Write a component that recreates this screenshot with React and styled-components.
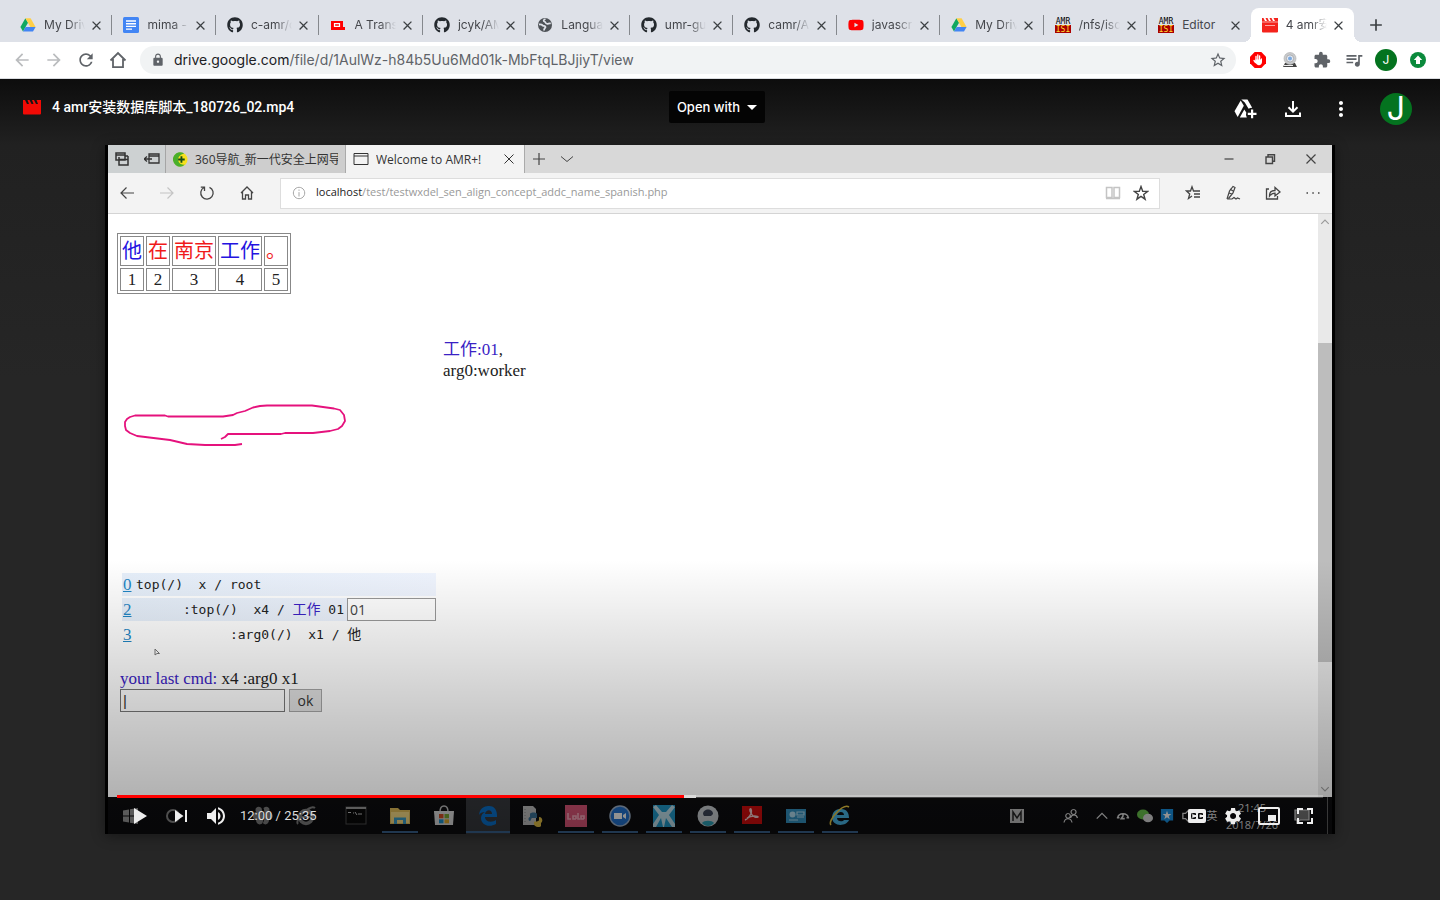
import React from "react";
import styled, { createGlobalStyle, css } from "styled-components";
import { FaGithub, FaYoutube } from "react-icons/fa";
import {
  MdArrowBack,
  MdArrowForward,
  MdRefresh,
  MdLock,
  MdStarBorder,
  MdExtension,
  MdQueueMusic,
  MdMoreVert,
  MdClose,
  MdAdd,
  MdSettings,
} from "react-icons/md";

const GlobalStyle = createGlobalStyle`
  *, *::before, *::after { box-sizing: border-box; }
  html, body, #root { height: 100%; }
  body {
    margin: 0;
    background: #262626;
    font-family: Inter, "Noto Sans CJK SC", sans-serif;
  }
  button { font: inherit; color: inherit; border: 0; padding: 0; background: none; cursor: pointer; }
  svg { display: block; flex: none; }
`;

const Page = styled.div`
  min-height: 100%;
  display: flex;
  flex-direction: column;
`;

/* ---------- outer browser ---------- */

const TabStrip = styled.nav`
  display: flex;
  height: 42px;
  padding: 8px 0 0 9px;
  background: #dee1e8;
`;

const Tabs = styled.div`
  display: flex;
  flex: 1;
  min-width: 0;
`;

const Tab = styled.div`
  flex: 1 1 0;
  min-width: 0;
  height: 34px;
  display: flex;
  align-items: center;
  padding: 0 7px 0 11px;
  position: relative;
  color: #45474c;
  border-radius: 8px 8px 0 0;
  ${(p) =>
    p.$divider &&
    css`
      &::after {
        content: "";
        position: absolute;
        right: 0;
        top: 7px;
        width: 1px;
        height: 20px;
        background: #85888d;
      }
    `}
  ${(p) =>
    p.$active &&
    css`
      background: #fff;
      &::before,
      &::after {
        content: "";
        position: absolute;
        bottom: 0;
        width: 8px;
        height: 8px;
      }
      &::before {
        left: -8px;
        background: radial-gradient(circle at 0 0, transparent 8px, #fff 8px);
      }
      &::after {
        right: -8px;
        background: radial-gradient(circle at 100% 0, transparent 8px, #fff 8px);
      }
    `}
`;

const TabButton = styled.button`
  flex: 1;
  min-width: 0;
  display: flex;
  align-items: center;
  gap: 8px;
  font-size: 12px;
  line-height: 16px;
  text-align: left;
`;

const TabTitle = styled.span`
  flex: 1;
  min-width: 0;
  overflow: hidden;
  white-space: nowrap;
  mask-image: ${(p) => (p.$fade ? "linear-gradient(to right, #000 calc(100% - 16px), transparent)" : "none")};
`;

const TabClose = styled.button`
  width: 16px;
  height: 16px;
  margin-left: 4px;
  color: #3c4043;
`;

const NewTab = styled.button`
  width: 86px;
  height: 34px;
  padding-left: 12px;
  color: #3c4043;
`;

const Toolbar = styled.div`
  display: flex;
  align-items: center;
  height: 37px;
  padding: 0 12px;
  background: #fff;
  border-bottom: 1px solid #dadce0;
`;

const ToolButton = styled.button`
  width: 20px;
  height: 20px;
  margin-right: 12px;
  display: grid;
  place-items: center;
  color: ${(p) => (p.$dim ? "#babcbe" : "#5f6368")};
`;

const Address = styled.div`
  flex: 1;
  height: 28px;
  display: flex;
  align-items: center;
  padding: 0 9px 0 11px;
  border-radius: 14px;
  background: #f1f3f4;
  color: #5f6368;
`;

const Url = styled.div`
  flex: 1;
  margin-left: 9px;
  font-size: 14px;
  line-height: 20px;
  white-space: nowrap;
  b {
    font-weight: 400;
    color: #202124;
  }
`;

const Extensions = styled.div`
  display: flex;
  align-items: center;
  gap: 12px;
  margin-left: 12px;
`;

const ExtButton = styled.button`
  width: 20px;
  height: 20px;
  display: grid;
  place-items: center;
  color: #5f6368;
`;

const Avatar = styled.button`
  width: ${(p) => p.$size}px;
  height: ${(p) => p.$size}px;
  border-radius: 50%;
  background: #04731f;
  color: #fff;
  font-size: ${(p) => p.$font}px;
  line-height: ${(p) => p.$size}px;
  text-align: center;
`;

const ProfileSlot = styled.div`
  width: 20px;
  display: flex;
  justify-content: center;
  button {
    flex: none;
  }
`;

/* ---------- viewer ---------- */

const Viewer = styled.main`
  flex: 1;
  display: flex;
  flex-direction: column;
  background: linear-gradient(#0d0d0d, #212121 66px, #262626 300px);
  padding-bottom: 66px;
`;

const ViewerBar = styled.header`
  display: grid;
  grid-template-columns: 1fr auto 1fr;
  align-items: center;
  height: 66px;
  padding: 0 28px 10px 22px;
  color: #fff;
`;

const FileTitle = styled.h1`
  display: flex;
  align-items: center;
  gap: 10px;
  margin: 0;
  font-family: Roboto, "Noto Sans CJK SC", sans-serif;
  font-size: 14px;
  line-height: 20px;
  font-weight: 500;
  white-space: nowrap;
`;

const OpenWith = styled.button`
  display: flex;
  align-items: center;
  gap: 7px;
  height: 32px;
  padding: 0 8px;
  border-radius: 2px;
  background: #040404;
  font-size: 13px;
  font-weight: 500;
`;

const ViewerActions = styled.div`
  display: flex;
  align-items: center;
  justify-content: flex-end;
  gap: 24px;
  padding-top: 4px;
`;

const IconButton = styled.button`
  width: 24px;
  height: 24px;
  display: grid;
  place-items: center;
`;

const AvatarSlot = styled.div`
  margin-left: 3px;
`;

const Player = styled.section`
  position: relative;
  margin: 0 105px;
  padding: 0 3px;
  background: #000;
  box-shadow: 0 2px 12px rgba(0, 0, 0, 0.4);
`;

/* ---------- recorded window ---------- */

const EdgeTabs = styled.div`
  display: flex;
  height: 28px;
  background: #d8d8d8;
  font-family: "Open Sans", "Noto Sans CJK SC", sans-serif;
  font-size: 12px;
  color: #333;
`;

const EdgeCorner = styled.div`
  width: 58px;
  display: flex;
  align-items: center;
  gap: 14px;
  padding-left: 6px;
  background: #cdd1d2;
  border-right: 1px solid #a5a5a5;
`;

const EdgeTab = styled.div`
  width: ${(p) => (p.$active ? 179 : 180)}px;
  display: flex;
  align-items: center;
  gap: 7px;
  padding: 0 7px;
  border-right: 1px solid #aaa;
  background: ${(p) => (p.$active ? "#f3f3f3" : "#cecece")};
`;

const EdgeTitle = styled.span`
  flex: 1;
  min-width: 0;
  overflow: hidden;
  white-space: nowrap;
`;

const EdgeButton = styled.button`
  width: 28px;
  display: grid;
  place-items: center;
  color: ${(p) => (p.$dim ? "#c4c4c4" : "#444")};
`;

const WindowButtons = styled.div`
  display: flex;
  gap: 13px;
  margin-left: auto;
  padding-right: 7px;
`;

const EdgeNav = styled.div`
  display: flex;
  align-items: center;
  height: 41px;
  padding: 0 5px;
  gap: 12px;
  background: #f3f3f3;
  border-bottom: 1px solid #d4d4d4;
`;

const EdgeAddress = styled.div`
  flex: 1;
  height: 31px;
  margin: 0 7px;
  display: flex;
  align-items: center;
  background: #fff;
  border: 1px solid #ddd;
  padding: 0 4px 0 11px;
  font-family: "Open Sans", sans-serif;
  font-size: 11px;
  line-height: 16px;
  color: #999;
  b {
    font-weight: 400;
    color: #222;
  }
`;

const EdgeUrl = styled.span`
  flex: 1;
  margin-left: 10px;
  padding-bottom: 3px;
`;

const Canvas = styled.div`
  display: flex;
  min-height: 583px;
  background: #fff;
`;

const Content = styled.div`
  flex: 1;
  padding: 19px 9px 0;
  color: #222;
  font-family: "Liberation Serif", "Noto Sans CJK SC", serif;
  font-size: 17px;
  line-height: 21px;
`;

const Scrollbar = styled.div`
  width: 14px;
  display: flex;
  flex-direction: column;
  align-items: center;
  padding: 3px 0;
  background: #e9e9e9;
  color: #999;
`;

const Thumb = styled.div`
  width: 14px;
  height: 319px;
  margin: 116px 0 auto;
  background: #bdbdbd;
`;

const WordTable = styled.table`
  border: 1px solid #888;
  border-spacing: 2px;
  text-align: center;
  td {
    border: 1px solid #888;
    padding: 1px;
    line-height: 19px;
  }
`;

const Word = styled.td`
  && {
    font-size: 20px;
    line-height: 26px;
    color: ${(p) => (p.$verb ? "#2413e0" : "#f01a1a")};
  }
`;

const Note = styled.p`
  margin: 45px 0 0 326px;
`;

const Blue = styled.span`
  color: #3a22c4;
`;

const Scribble = styled.svg`
  margin: 23px 0 0 6px;
`;

const Tree = styled.div`
  width: 314px;
  margin: 125px 0 0 5px;
  font-family: "DejaVu Sans Mono", "Noto Sans CJK SC", monospace;
  font-size: 13px;
`;

const TreeRow = styled.div`
  display: flex;
  align-items: center;
  height: 23px;
  margin-bottom: 2px;
  white-space: pre;
  background: ${(p) => (p.$lit ? "linear-gradient(90deg, #e6effa, #f0f5ff)" : "none")};
  span {
    font-size: 14px;
  }
  a {
    width: 13px;
    margin-left: 1px;
    color: #1f86c4;
    font-family: "Liberation Serif", serif;
    font-size: 17px;
  }
`;

const SenseInput = styled.input`
  width: 89px;
  height: 23px;
  margin-left: auto;
  padding: 0 2px;
  border: 1px solid #999;
  background: #fff;
  font-family: "Open Sans", sans-serif;
  font-size: 14px;
  color: #444;
`;

const Cursor = styled.svg`
  margin: 0 0 0 36px;
`;

const Command = styled.form`
  margin: 12px 0 0 3px;
  label {
    display: block;
  }
  div {
    display: flex;
    gap: 4px;
  }
`;

const CommandInput = styled.input`
  width: 165px;
  height: 23px;
  padding: 0 2px;
  border: 1px solid #777;
  background: #fff;
  font-family: "Liberation Sans", sans-serif;
  font-size: 15px;
  color: #333;
`;

const Submit = styled.button`
  && {
    width: 33px;
    height: 23px;
    border: 1px solid #a5a5a5;
    background: #e2e2e2;
    font-family: "Open Sans", sans-serif;
    font-size: 14px;
    line-height: 16px;
    color: #333;
  }
`;

const Taskbar = styled.div`
  display: flex;
  height: 37px;
  padding-left: 4px;
  background: #0b0b0d;
`;

const PinnedGroup = styled.div`
  display: flex;
  margin-right: 7px;
`;

const TaskItem = styled.button`
  width: ${(p) => (p.$pinned ? 43 : 44)}px;
  display: grid;
  place-items: center;
  position: relative;
  background: ${(p) => (p.$active ? "#303236" : "none")};
  ${(p) =>
    p.$running &&
    css`
      &::after {
        content: "";
        position: absolute;
        left: ${p.$active ? 0 : 4}px;
        right: ${p.$active ? 0 : 4}px;
        bottom: 1px;
        height: 2px;
        background: #33587f;
      }
    `}
`;

const Tray = styled.div`
  display: flex;
  align-items: center;
  margin-left: auto;
  color: #c4c4c4;
  font-family: "Open Sans", "Noto Sans CJK SC", sans-serif;
  font-size: 11px;
  line-height: 17px;
`;

const TrayItem = styled.div`
  width: ${(p) => p.$w}px;
  display: grid;
  place-items: center;
  text-align: center;
`;

const ShowDesktop = styled.div`
  width: 4px;
  margin-right: 4px;
  height: 37px;
  border-right: 1px solid #555;
`;

const Shade = styled.div`
  position: absolute;
  inset: auto 3px 0;
  height: 274px;
  pointer-events: none;
  background: linear-gradient(
    transparent,
    rgba(0, 0, 0, 0.1) 28%,
    rgba(0, 0, 0, 0.21) 58%,
    rgba(0, 0, 0, 0.3) 86%,
    rgba(0, 0, 0, 0.38)
  );
`;

const Controls = styled.div`
  position: absolute;
  inset: auto 12px 0;
  color: #eee;
`;

const Seek = styled.input`
  display: block;
  appearance: none;
  width: 100%;
  height: 3px;
  margin: 0;
  background: linear-gradient(
    90deg,
    #f00 ${(p) => p.$played}%,
    #dadada ${(p) => p.$played}% ${(p) => p.$loaded}%,
    rgba(255, 255, 255, 0.25) ${(p) => p.$loaded}%
  );
  &::-webkit-slider-thumb {
    appearance: none;
    width: 0;
    height: 0;
  }
`;

const ControlRow = styled.div`
  display: flex;
  align-items: center;
  height: 36px;
  padding: 0 0 0 5px;
`;

const ControlButton = styled.button`
  width: ${(p) => (p.$wide ? 41 : 36)}px;
  height: 36px;
`;

const Time = styled.span`
  margin: 0 auto 0 5px;
  font-family: Roboto, sans-serif;
  font-size: 13px;
  line-height: 20px;
  color: #ddd;
`;

/* ---------- drawings ---------- */

const DriveLogo = () => (
  <svg width="16" height="16" viewBox="0 0 16 16">
    <path d="M5.4 1.2 0.4 10.1 3 14.6 8 5.8z" fill="#11a861" />
    <path d="M5.4 1.2h5.2l5 8.9h-5.2z" fill="#ffcf48" />
    <path d="M5.6 10.1h10L13 14.6H3z" fill="#4285f4" />
  </svg>
);

const DocsLogo = () => (
  <svg width="16" height="16" viewBox="0 0 16 16">
    <rect width="16" height="16" rx="1.5" fill="#4285f4" />
    <path d="M3 4h10M3 6.7h10M3 9.4h10M3 12.1h6" stroke="#fff" strokeWidth="1.4" />
  </svg>
);

const RedBoxLogo = () => (
  <svg width="16" height="16" viewBox="0 0 16 16">
    <path d="M1 4h12v6h2v3H1z" fill="#f00" />
    <path d="M4.500 6.700h5v2.600h-5z" fill="#f00" stroke="#fff" strokeWidth="1.200" />
  </svg>
);

const GlobeLogo = () => (
  <svg width="16" height="16" viewBox="0 0 16 16">
    <circle cx="8" cy="8" r="7" fill="#4e5257" />
    <path d="M2 7.500c2-.3 3 .2 3.800 1 .8.700 2.700.3 2.700 1.500 0 1-1.500 1-1.500 3.500" fill="none" stroke="#dee1e8" strokeWidth="1.800" />
    <path d="M8.500 2c-2 .6-2.500 2.200-1 2.600 1.300.3.800 1.900 2.300 2.200 1.500.3 2-.8 4-.3" fill="none" stroke="#dee1e8" strokeWidth="1.600" />
  </svg>
);

const AmrLogo = () => (
  <svg width="16" height="16" viewBox="0 0 16 16" fontFamily="DejaVu Sans Mono, monospace" textAnchor="middle">
    <rect y="8" width="16" height="8" fill="#a00" />
    <text x="8" y="7" fontSize="8" fill="#000">AMR</text>
    <text x="8" y="15" fontSize="8" fill="#fd3">ISI</text>
  </svg>
);

const ClapperLogo = () => (
  <svg width="16" height="16" viewBox="0 0 16 16">
    <path d="M0 1h1.500l1.500 3h2L3.500 1h2L7 4h2L7.500 1h2L11 4h2l-1.500-3H16v13.500a1 1 0 0 1-1 1H1a1 1 0 0 1-1-1z" fill="#f4231c" />
    <path d="M0 5h16M3 8.500h10" stroke="#fff" strokeWidth=".6" />
  </svg>
);

const ViewerClapper = () => (
  <svg width="20" height="16" viewBox="0 0 20 16">
    <path d="M1 1h2l2 4h2L5.500 1h2l2 4h2l-1.500-4h2l2 4h2l-1.500-4H19v13.500a1 1 0 0 1-1 1H2a1 1 0 0 1-1-1z" fill="#f20a05" />
  </svg>
);

const HomeIcon = () => (
  <svg width="18" height="18" viewBox="0 0 18 18" fill="none" stroke="currentColor" strokeWidth="1.800">
    <path d="M1.500 9.500 9 2l7.500 7.500M4 8v8.100h10V8" />
  </svg>
);

const HandIcon = () => (
  <svg width="16" height="16" viewBox="0 0 16 16">
    <path d="M4.700 0h6.600L16 4.700v6.600L11.300 16H4.700L0 11.300V4.700z" fill="#f00" />
    <path d="M6 8V4.500M7.800 8V3M9.600 8V4M4 8.500l1.500 2" stroke="#fff" strokeWidth="1.300" strokeLinecap="round" />
    <path d="M5.400 7.500h5l1.600-1.500v4c0 2-1.300 3.200-3 3.200S6 12 5 10z" fill="#fff" />
  </svg>
);

const WebcamIcon = () => (
  <svg width="16" height="16" viewBox="0 0 16 16">
    <path d="M3 11h10l2 4H1z" fill="#444" />
    <path d="M2 13h9v1H2z" fill="#eee" />
    <circle cx="8" cy="6.500" r="6" fill="#c9cbcd" stroke="#aaa" strokeWidth=".6" />
    <circle cx="8" cy="6.500" r="3.600" fill="#e8ecf4" stroke="#999" strokeWidth=".7" />
    <circle cx="8" cy="6.500" r="2" fill="#7aa9e0" />
  </svg>
);

const UpIcon = () => (
  <svg width="16" height="16" viewBox="0 0 16 16">
    <circle cx="8" cy="8" r="8" fill="#0a8a3c" />
    <path d="M8 3.500 12.200 8H10v4H6V8H3.800z" fill="#fff" />
  </svg>
);

const DriveAddIcon = () => (
  <svg width="24" height="24" viewBox="0 0 24 24" fill="#fff">
    <path d="M8.300 2.500h6.200l4.700 8.200a6 6 0 0 0-3.600 1.100L11.800 5.500z" />
    <path d="M7.700 3.400 10.800 8.700 4.700 20 1.500 14.300z" />
    <path d="M11.300 12.500 13.300 15.500a6 6 0 0 0 .5 5H6.800z" />
    <path d="M18 12.500h2.200v3.200h3.300v2.200h-3.300v3.300H18v-3.300h-3.200v-2.200H18z" />
  </svg>
);

const DownloadIcon = () => (
  <svg width="24" height="24" viewBox="0 0 24 24" fill="none" stroke="#fff" strokeWidth="2">
    <path d="M12 4v10.500M7.500 10.300 12 14.700l4.500-4.400M5 15.500V19h14v-3.500" />
  </svg>
);

const Line = ({ size = 16, d, w = 1.2, fill = "none" }) => (
  <svg width={size} height={size} viewBox="0 0 16 16" fill={fill} stroke="currentColor" strokeWidth={w}>
    <path d={d} />
  </svg>
);

const STAR = "M8 1.500 9.700 6.200l5 .1-4 3.100 1.400 4.800L8 11.400l-4.100 2.800 1.400-4.800-4-3.100 5-.1z";

const Badge360 = () => (
  <svg width="15" height="15" viewBox="0 0 16 16">
    <circle cx="8" cy="8" r="7.500" fill="#f7e11d" />
    <path d="M3 14A7.500 7.500 0 0 1 12 1.700C7 3 5 6 5.500 9c.5 3 3 4.500 7 4.500A7.500 7.500 0 0 1 3 14z" fill="#4aaf2a" />
    <path d="M9 4.500v7M5.500 8h7" stroke="#164d14" strokeWidth="2" />
  </svg>
);

const YtIcon = ({ children }) => (
  <svg width="36" height="36" viewBox="0 0 36 36" fill="currentColor" fillRule="evenodd">
    {children}
  </svg>
);

const TaskSvg = ({ children, size = 22 }) => (
  <svg width={size} height={size} viewBox="0 0 22 22">
    {children}
  </svg>
);

const taskIcons = {
  windows: (
    <TaskSvg>
      <path d="M0 5.500 6 4.500v6H0zM7 4.300l8-1.300v7.500H7zM0 11.500h6v6L0 16.500zM7 11.500h8V19l-8-1.300z" fill="#888" />
    </TaskSvg>
  ),
  cortana: (
    <TaskSvg>
      <circle cx="7" cy="11" r="6" fill="none" stroke="#777" strokeWidth="2" />
    </TaskSvg>
  ),
  blank: <TaskSvg />,
  fan: (
    <TaskSvg>
      <path d="M9.500 3C6 0 2 3 4 7c-5 1-4 7 0 8 0 4 4 6 6.500 3 1.500-4 0-11-1-15zM11.500 3C15 0 19 3 17 7c5 1 5 7 0 8 0 4-4 6-6 3 2-4 2-11 .5-15z" fill="#707070" />
    </TaskSvg>
  ),
  oldIe: (
    <TaskSvg>
      <circle cx="11" cy="12" r="6.500" fill="none" stroke="#707070" strokeWidth="3.500" />
      <path d="M6 12h11M3 19C-1 15 15-1 20 3" stroke="#707070" strokeWidth="2" fill="none" />
    </TaskSvg>
  ),
  terminal: (
    <TaskSvg>
      <rect x="1" y="2" width="20" height="17" fill="#080808" stroke="#444" />
      <path d="M1 3h20" stroke="#888" strokeWidth="2" />
      <path d="M3 7.500h3M8 8h1M10 7l2 3M13 9h4" stroke="#aaa" />
    </TaskSvg>
  ),
  folder: (
    <TaskSvg>
      <path d="M1 3h8l2 2h10v14H1z" fill="#c9a94f" />
      <path d="M2 7h18v11H2z" fill="#ddc477" />
      <path d="M5 19v-6.500h12V19h-3v-4H8v4z" fill="#348bb0" />
    </TaskSvg>
  ),
  store: (
    <TaskSvg>
      <path d="M7 7c0-8 8-8 8 0" fill="none" stroke="#aaa" strokeWidth="1.500" />
      <path d="M1 6h20l-1 14H2z" fill="#c2c2c2" />
      <path d="M6 9h4.500v4.300H6z" fill="#b8441e" />
      <path d="M11.500 9H16v4.300h-4.500z" fill="#6b942b" />
      <path d="M6 14.300h4.500v4H6z" fill="#1980b2" />
      <path d="M11.500 14.300H16v4h-4.500z" fill="#c89725" />
    </TaskSvg>
  ),
  edge: (
    <TaskSvg>
      <path d="M2 10C3 1 10 1 12 1c6 0 8 5 8 9v2H8c0 5 7 6 11 3v4c-7 4-15 1-15-6 0-3 2-5 4-6-3 0-5 1-6 3zm6-1h7c0-5-6-5-7 0z" fill="#0863b3" />
    </TaskSvg>
  ),
  python: (
    <TaskSvg>
      <path d="M2 1h10l3 3v16H2z" fill="#a7a7a7" />
      <path d="M4 4v14" stroke="#777" strokeDasharray="1 2" />
      <path d="M9 12V9c0-2 7-2 7 0v4h-5c-1 0-1 3-2 3-2 0-2-4 0-4z" fill="#326384" />
      <path d="M13 19v-2c0-1 5 0 5-2v-3c4 0 4 5 2 6v3c-1 2-7 1-7-2z" fill="#c7a83c" />
    </TaskSvg>
  ),
  lala: (
    <TaskSvg>
      <path d="M0 0h22v22H0z" fill="#c04a68" />
      <path d="M3 8v6h3M11 14v-3H8v3h3M13 8v6h2M19 14v-3h-3v3h3" stroke="#d995a6" strokeWidth="1.600" fill="none" />
    </TaskSvg>
  ),
  zoom: (
    <TaskSvg>
      <circle cx="11" cy="11" r="10" fill="#1e64b6" stroke="#8b9db3" strokeWidth="1.500" />
      <path d="M5 8h8v6H5zM14 10l3-2v6l-3-2z" fill="#ddd" />
    </TaskSvg>
  ),
  rays: (
    <TaskSvg>
      <path d="M0 0h22v22H0z" fill="#1c86b0" />
      <path d="M0 2 3 0l6 7h4l6-7 3 2-6 8 6 9v3h-3l-6-9-2 9h-1l-2-9-5 9H0v-3l6-9z" fill="#a9c5cf" />
    </TaskSvg>
  ),
  person: (
    <TaskSvg>
      <circle cx="11" cy="11" r="10.500" fill="#b1b5b8" />
      <path d="M6 9c0-6 10-6 10 0l-2 2H7z" fill="#343b4b" />
      <path d="M5 18c2-3 10-3 12 0-3 4-9 4-12 0z" fill="#278b9e" />
    </TaskSvg>
  ),
  acrobat: (
    <TaskSvg>
      <path d="M1 1h20v18H1z" fill="#b90b0b" />
      <path d="M4 15c3-1 8-7 6-11-1-1-2 1 0 4 2 4 5 5 7 4 1-1-6-2-11 1" fill="none" stroke="#d5b4b4" strokeWidth="1.400" />
    </TaskSvg>
  ),
  panel: (
    <TaskSvg>
      <path d="M1 4h20v14H1z" fill="#2d80aa" />
      <circle cx="7.500" cy="9.500" r="3" fill="#9dc2d3" />
      <path d="M12 7h7v3h-7zM12 12h7M4 15h9" stroke="#9dc2d3" strokeWidth="1.200" fill="none" />
    </TaskSvg>
  ),
  ie: (
    <TaskSvg>
      <path d="M3 12C4 5 8 4 12 4c6 0 8 4 8 9H8c0 4 6 4 7 2h5c-3 7-17 7-17-3zm5-2h7c0-4-6-4-7 0z" fill="#3fa0cb" />
      <path d="M2 20C-2 16 14-2 20 2" fill="none" stroke="#d0b23a" strokeWidth="1.600" />
    </TaskSvg>
  ),
};

/* ---------- data ---------- */

const tabs = [
  { icon: <DriveLogo />, title: "My Driv" },
  { icon: <DocsLogo />, title: "mima -" },
  { icon: <FaGithub size={16} color="#24292e" />, title: "c-amr/c" },
  { icon: <RedBoxLogo />, title: "A Trans" },
  { icon: <FaGithub size={16} color="#24292e" />, title: "jcyk/AM" },
  { icon: <GlobeLogo />, title: "Langua" },
  { icon: <FaGithub size={16} color="#24292e" />, title: "umr-gu" },
  { icon: <FaGithub size={16} color="#24292e" />, title: "camr/A" },
  { icon: <FaYoutube size={16} color="#f00" />, title: "javascr" },
  { icon: <DriveLogo />, title: "My Driv" },
  { icon: <AmrLogo />, title: "/nfs/iso" },
  { icon: <AmrLogo />, title: "Editor", short: true },
  { icon: <ClapperLogo />, title: "4 amr安", active: true },
];

const words = [
  { text: "他", verb: true },
  { text: "在" },
  { text: "南京" },
  { text: "工作", verb: true },
  { text: "。" },
];

const running = [
  { icon: "terminal" },
  { icon: "folder", running: true },
  { icon: "store" },
  { icon: "edge", running: true, active: true },
  { icon: "python" },
  { icon: "lala", running: true },
  { icon: "zoom", running: true },
  { icon: "rays", running: true },
  { icon: "person", running: true },
  { icon: "acrobat", running: true },
  { icon: "panel", running: true },
  { icon: "ie", running: true },
];

/* ---------- sections ---------- */

const Browser = () => (
  <>
    <TabStrip aria-label="Browser tabs">
      <Tabs>
        {tabs.map((t, i) => (
          <Tab key={i} $active={t.active} $divider={i < 11}>
            <TabButton>
              {t.icon}
              <TabTitle $fade={!t.short}>{t.title}</TabTitle>
            </TabButton>
            <TabClose aria-label="Close tab">
              <MdClose size={15} />
            </TabClose>
          </Tab>
        ))}
      </Tabs>
      <NewTab aria-label="New tab">
        <MdAdd size={20} />
      </NewTab>
    </TabStrip>
    <Toolbar>
      <ToolButton $dim aria-label="Back"><MdArrowBack size={20} /></ToolButton>
      <ToolButton $dim aria-label="Forward"><MdArrowForward size={20} /></ToolButton>
      <ToolButton aria-label="Reload"><MdRefresh size={20} /></ToolButton>
      <ToolButton aria-label="Home"><HomeIcon /></ToolButton>
      <Address>
        <MdLock size={14} />
        <Url><b>drive.google.com</b>/file/d/1AulWz-h84b5Uu6Md01k-MbFtqLBJjiyT/view</Url>
        <MdStarBorder size={18} />
      </Address>
      <Extensions>
        <ExtButton aria-label="Ad blocker"><HandIcon /></ExtButton>
        <ExtButton aria-label="Webcam"><WebcamIcon /></ExtButton>
        <ExtButton aria-label="Extensions"><MdExtension size={18} /></ExtButton>
        <ExtButton aria-label="Media"><MdQueueMusic size={20} /></ExtButton>
        <ProfileSlot><Avatar $size={22} $font={12}>J</Avatar></ProfileSlot>
        <ExtButton aria-label="Update"><UpIcon /></ExtButton>
      </Extensions>
    </Toolbar>
  </>
);

const RecordedBrowser = () => (
  <>
    <EdgeTabs>
      <EdgeCorner>
        <Line d="M2 2h9v7H2zM2 4h9M5 6v8h9V5M5 8.500h9M11 5h3" w={1.5} />
        <Line d="M5 3h10v9H5zM5 5h10M0 8h8M3 5.500 0 8l3 2.500" w={1.3} />
      </EdgeCorner>
      <EdgeTab>
        <Badge360 />
        <EdgeTitle>360导航_新一代安全上网导</EdgeTitle>
      </EdgeTab>
      <EdgeTab $active>
        <Line d="M1 2.500h14v11H1zM1 5h14" w={1} />
        <EdgeTitle>Welcome to AMR+!</EdgeTitle>
        <Line d="m3.500 3.500 9 9m0-9-9 9" w={1} />
      </EdgeTab>
      <EdgeButton aria-label="New tab"><Line d="M8 2v12M2 8h12" /></EdgeButton>
      <EdgeButton aria-label="Tab previews"><Line d="m2 5.500 6 5 6-5" w={1} /></EdgeButton>
      <WindowButtons>
        <EdgeButton aria-label="Minimize"><Line d="M3.500 8h9" /></EdgeButton>
        <EdgeButton aria-label="Restore"><Line d="M4 6h6.500v6.500H4zM6 6V3.800h6.500v6.500h-2" w={1.4} /></EdgeButton>
        <EdgeButton aria-label="Close window"><Line d="m3.500 3.500 9 9m0-9-9 9" /></EdgeButton>
      </WindowButtons>
    </EdgeTabs>
    <EdgeNav>
      <EdgeButton aria-label="Back"><Line d="M15 8H2M7.500 2.500 2 8l5.500 5.500" /></EdgeButton>
      <EdgeButton $dim aria-label="Forward"><Line d="M1 8h13M8.500 2.500 14 8l-5.500 5.500" /></EdgeButton>
      <EdgeButton aria-label="Refresh"><Line d="M10.500 2.300a6.200 6.200 0 1 1-5.500.2M5.500 6V2.200H1.800" w={1.3} /></EdgeButton>
      <EdgeButton aria-label="Home"><Line d="M2 8 8 2l6 6M3.500 7v7h3v-4h3v4h3V7" w={1.3} /></EdgeButton>
      <EdgeAddress>
        <Line size={14} d="M8 1.500a6.500 6.500 0 1 0 .1 0M8 7v5M8 4v1.500" w={1} />
        <EdgeUrl><b>localhost</b>/test/testwxdel_sen_align_concept_addc_name_spanish.php</EdgeUrl>
        <EdgeButton $dim aria-label="Reading view"><Line d="M1.500 2.500H7v10H1.500zM9 2.500h5.500v10H9zM1 13.500h14" w={1.5} /></EdgeButton>
        <EdgeButton aria-label="Add to favorites"><Line d={STAR} w={1.4} /></EdgeButton>
      </EdgeAddress>
      <EdgeButton aria-label="Favorites"><Line d="M15 6H8.500L7 1.800 5.500 6H1.500l3.200 3-1.200 4.500L7 11M9 9h6M9 12h6" w={1.3} /></EdgeButton>
      <EdgeButton aria-label="Notes"><Line d="M2 14 4.500 6 8 1.500l2 1L8 8l-4.500 5.500M2 14h5l2-1.500 2 1.500 1.500-1L15 14M5 4l3 2M4 8l3 1" /></EdgeButton>
      <EdgeButton aria-label="Share"><Line d="M4 4H1.500v10h11v-3M4.500 11c0-4 2-5.500 5.500-5.500V2.500L15 7l-5 4V8.200C7.500 8.200 6 9 4.500 11z" w={1.3} /></EdgeButton>
      <EdgeButton aria-label="More"><Line d="M1.500 8H3M7.300 8h1.500M13 8h1.500" w={1.5} /></EdgeButton>
    </EdgeNav>
    <Canvas>
      <Content>
        <WordTable>
          <tbody>
            <tr>{words.map((w) => <Word key={w.text} $verb={w.verb}>{w.text}</Word>)}</tr>
            <tr>{words.map((w, i) => <td key={w.text}>{i + 1}</td>)}</tr>
          </tbody>
        </WordTable>
        <Note>
          <Blue>工作:01</Blue>,<br />
          arg0:worker
        </Note>
        <Scribble width="224" height="44" viewBox="0 0 224 44" fill="none" stroke="#e5127d" strokeWidth="1.800" strokeLinejoin="round">
          <path d="M119 40 112 41H82L64 40 47 36 14 32 7 29 3 26 2 22V18L4 15 7 13 12 11.500H42L45 12.500H100L110 11 114 9 122 7 130 3.500 137 2 144 1.500H189L200 3 211 4.500 217 6 221 11 222 17 219 22 215 25 207 27 190 29H162L158 30H105L102 33 98 35" />
        </Scribble>
        <Tree>
          <TreeRow $lit><a href="#0">0</a>{"top(/)  x / root"}</TreeRow>
          <TreeRow $lit>
            <a href="#2">2</a>{"      :top(/)  x4 / "}<Blue>工作</Blue>{" 01"}
            <SenseInput aria-label="Sense" defaultValue="01" />
          </TreeRow>
          <TreeRow><a href="#3">3</a>{"            :arg0(/)  x1 / "}<span>他</span></TreeRow>
        </Tree>
        <Cursor width="8" height="8" viewBox="0 0 8 8" fill="#fff" stroke="#777">
          <path d="M2 1v6l2-1.500h2.500z" />
        </Cursor>
        <Command onSubmit={(e) => e.preventDefault()}>
          <label htmlFor="cmd"><Blue>your last cmd:</Blue> x4 :arg0 x1</label>
          <div>
            <CommandInput id="cmd" defaultValue="|" />
            <Submit>ok</Submit>
          </div>
        </Command>
      </Content>
      <Scrollbar>
        <Line size={10} d="m2 11 6-6 6 6" w={1.8} />
        <Thumb />
        <Line size={10} d="m2 5 6 6 6-6" w={1.8} />
      </Scrollbar>
    </Canvas>
    <Taskbar>
      <PinnedGroup>
        {["windows", "cortana", "blank", "fan", "oldIe"].map((name) => (
          <TaskItem key={name} $pinned aria-label={name}>{taskIcons[name]}</TaskItem>
        ))}
      </PinnedGroup>
      {running.map((t) => (
        <TaskItem key={t.icon} $running={t.running} $active={t.active} aria-label={t.icon}>
          {taskIcons[t.icon]}
        </TaskItem>
      ))}
      <Tray>
        <TrayItem $w={66}>
          <svg width="14" height="14" viewBox="0 0 14 14">
            <path d="M0 0h14v14H0z" fill="#aaa" />
            <path d="M3 12V3l4 6 4-6v9" fill="none" stroke="#222" strokeWidth="1.500" />
          </svg>
        </TrayItem>
        <TrayItem $w={42}><Line d="M10.500 1.500a2.500 2.500 0 1 0 .1 0M7.500 10c1-4 6-4 7 0M5 5.500A2.300 2.300 0 1 0 5.100 5.500M1 14.500c1-5 7-5 8 0" /></TrayItem>
        <TrayItem $w={20}><Line size={14} d="m2 11 6-6 6 6" w={1.5} /></TrayItem>
        <TrayItem $w={22}><Line size={14} d="M2 10c1-6 11-6 12 0M1 10h3M12 10h3M8 5v3L6 11h4" w={1.8} /></TrayItem>
        <TrayItem $w={22}>
          <svg width="16" height="14" viewBox="0 0 16 14">
            <ellipse cx="6" cy="5.500" rx="6" ry="5" fill="#5cab42" />
            <ellipse cx="11" cy="9" rx="5" ry="4.300" fill="#c0c0c0" />
          </svg>
        </TrayItem>
        <TrayItem $w={22}>
          <svg width="14" height="14" viewBox="0 0 16 16">
            <path d="M1 0h14v13h-4l-3 3-3-3H1z" fill="#1580c8" />
            <path d={STAR} fill="#ddd" transform="translate(2 1) scale(.75)" />
          </svg>
        </TrayItem>
        <TrayItem $w={22}><Line size={14} d="M1 5h3l4-4v14l-4-4H1zM11 5q3 3 0 6" w={1.5} /></TrayItem>
        <TrayItem $w={24}>英</TrayItem>
        <TrayItem $w={56}>
          <span>21:45<br />2018/7/26</span>
        </TrayItem>
        <TrayItem $w={44}><Line d="M1 2h14v10H6l-3 3v-3H1z" fill="#666" /></TrayItem>
        <ShowDesktop />
      </Tray>
    </Taskbar>
  </>
);

const cc = "M17 17h-1.500v-.5h-2v3h2V19H17v1a1 1 0 0 1-1 1h-3a1 1 0 0 1-1-1v-4a1 1 0 0 1 1-1h3a1 1 0 0 1 1 1zM24 17h-1.500v-.5h-2v3h2V19H24v1a1 1 0 0 1-1 1h-3a1 1 0 0 1-1-1v-4a1 1 0 0 1 1-1h3a1 1 0 0 1 1 1z";

const PlayerControls = () => (
  <Controls>
    <Seek type="range" aria-label="Seek" min="0" max="1535" defaultValue="720" $played={47} $loaded={48} />
    <ControlRow>
      <ControlButton $wide aria-label="Play"><YtIcon><path d="M12 26 25 18 12 10z" /></YtIcon></ControlButton>
      <ControlButton aria-label="Next"><YtIcon><path d="M12 24 20.500 18 12 12zM22 12v12h2V12z" /></YtIcon></ControlButton>
      <ControlButton aria-label="Mute">
        <YtIcon>
          <path d="M8 21h4l5 5V10l-5 5H8zM19 14v8c1.480-.68 2.500-2.230 2.500-4S20.480 14.740 19 14zM19 11.290c2.890.860 5 3.540 5 6.710s-2.110 5.850-5 6.710v2.060c4.010-.910 7-4.490 7-8.770s-2.990-7.860-7-8.770z" />
        </YtIcon>
      </ControlButton>
      <Time>12:00 / 25:35</Time>
      <ControlButton aria-label="Captions">
        <YtIcon><path d={"M11 11a2 2 0 0 0-2 2v10a2 2 0 0 0 2 2h14a2 2 0 0 0 2-2V13a2 2 0 0 0-2-2z" + cc} /></YtIcon>
      </ControlButton>
      <ControlButton aria-label="Settings">
        <YtIcon><g transform="translate(8 8) scale(.84)"><MdSettings size={24} /></g></YtIcon>
      </ControlButton>
      <ControlButton aria-label="Miniplayer">
        <YtIcon><path d="M25 17h-8v6h8zM29 25V11a2 2 0 0 0-2-2H9a2 2 0 0 0-2 2v14a2 2 0 0 0 2 2h18a2 2 0 0 0 2-2zM27 25H9V11h18z" /></YtIcon>
      </ControlButton>
      <ControlButton aria-label="Full screen">
        <YtIcon><path d="M10 16h2v-4h4v-2h-6zM20 10v2h4v4h2v-6zM24 24h-4v2h6v-6h-2zM12 20h-2v6h6v-2h-4z" /></YtIcon>
      </ControlButton>
    </ControlRow>
  </Controls>
);

export default function App() {
  return (
    <Page>
      <GlobalStyle />
      <Browser />
      <Viewer>
        <ViewerBar>
          <FileTitle><ViewerClapper />4 amr安装数据库脚本_180726_02.mp4</FileTitle>
          <OpenWith>
            Open with
            <svg width="10" height="5" viewBox="0 0 10 5"><path d="M0 0h10L5 5z" fill="#fff" /></svg>
          </OpenWith>
          <ViewerActions>
            <IconButton aria-label="Add to Drive"><DriveAddIcon /></IconButton>
            <IconButton aria-label="Download"><DownloadIcon /></IconButton>
            <IconButton aria-label="More actions"><MdMoreVert size={24} /></IconButton>
            <AvatarSlot><Avatar $size={32} $font={32}>J</Avatar></AvatarSlot>
          </ViewerActions>
        </ViewerBar>
        <Player>
          <RecordedBrowser />
          <Shade />
          <PlayerControls />
        </Player>
      </Viewer>
    </Page>
  );
}
